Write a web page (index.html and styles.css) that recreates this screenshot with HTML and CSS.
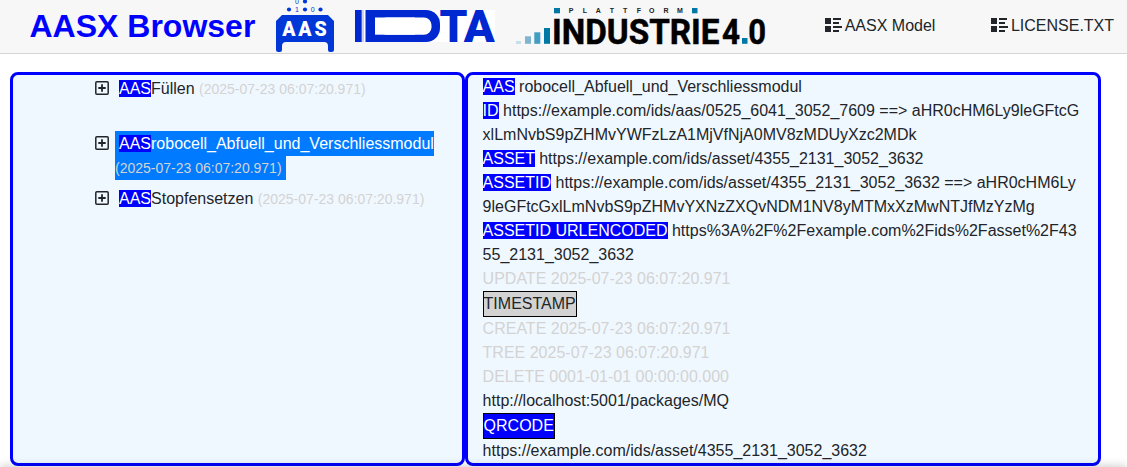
FILE: index.html
```html
<!DOCTYPE html>
<html lang="en">
<head>
<meta charset="utf-8">
<title>AASX Browser</title>
<link rel="stylesheet" href="styles.css">
</head>
<body>
<svg width="0" height="0" class="defs">
  <symbol id="list-rich" viewBox="0 0 17 14">
    <path d="M0 0h6v6H0zM0 8h6v6H0zM8 0h8v2H8zM8 4h6v2H8zM8 8h9v2H8zM8 12h6v2H8z"/>
  </symbol>
  <symbol id="plus-box" viewBox="0 0 14 14">
    <rect x=".8" y=".8" width="12.4" height="12.4" rx="1" fill="none" stroke="currentColor" stroke-width="1.5"/>
    <path d="M7 3.3v7.4M3.3 7h7.4" stroke="currentColor" stroke-width="1.8"/>
  </symbol>
</svg>
<header class="topbar">
  <h1 class="title">AASX Browser</h1>
  <svg class="logo-aas" width="60" height="53" viewBox="275 0 60 53">
    <g fill="#0038d8">
      <path d="M282 15h46l6 6v28.500a2.500 2.500 0 0 1-2.500 2.500h-1.500a2 2 0 0 1-2-2v-4q0-4-4-4h-38q-4 0-4 4v4a2 2 0 0 1-2 2h-1.500a2.500 2.500 0 0 1-2.500-2.500V21z" />
      <circle cx="305" cy="1.500" r="2.100"/><circle cx="289" cy="9.500" r="2.100"/><circle cx="305" cy="9.500" r="2.100"/><circle cx="320.500" cy="9.500" r="2.100"/>
      <g class="bits"><text x="295" y="3.500">0</text><text x="295" y="12">1</text><text x="310.700" y="12">0</text></g>
    </g>
    <text class="aas-word" x="282.300 298.300 314.500" y="36">AAS</text>
  </svg>
  <svg class="logo-idta" width="140" height="32" viewBox="0 0 140 32">
    <rect width="140" height="32" fill="#fff"/>
    <g fill="#0028d0">
      <rect width="6.700" height="32"/>
      <rect x="7.400" width="1.200" height="32" fill="#a9b5ec"/>
      <rect x="10.500" width="40" height="32"/><rect x="20" width="65" height="32" rx="14"/>
      <rect x="20" y="7.500" width="40" height="17.200" fill="#fff"/><rect x="24" y="7.500" width="52.500" height="17.200" rx="7.500" fill="#fff"/>
      <text class="idta-word" x="84.500" y="32" textLength="28" lengthAdjust="spacingAndGlyphs">T</text>
      <text class="idta-word" x="108.800" y="32" textLength="31" lengthAdjust="spacingAndGlyphs">A</text>
    </g>
  </svg>
  <svg class="logo-i40" width="252" height="40" viewBox="515 7 252 40">
    <rect x="516" y="41" width="5" height="3" fill="#c8dfea"/>
    <rect x="525" y="36.300" width="6" height="7.500" fill="#80b4cf"/>
    <rect x="534.300" y="32.300" width="6" height="11.500" fill="#419dc1"/>
    <g fill="#0078a5"><rect x="544" y="28" width="6" height="15.800"/><rect x="554" y="8" width="6" height="5.300"/><rect x="692" y="8" width="5.500" height="5.300"/><rect x="742" y="38" width="5.500" height="5.800"/></g>
    <text class="platform" y="13.300" x="568.700 582.700 595.700 609.700 623 636.700 649 663.500 677">PLATTFORM</text>
    <text class="industry" x="552" y="43.600" textLength="167.500" lengthAdjust="spacingAndGlyphs">INDUSTRIE</text>
    <text class="industry" x="722" y="43.600" textLength="18" lengthAdjust="spacingAndGlyphs">4</text>
    <text class="industry" x="748.300" y="43.600" textLength="17.800" lengthAdjust="spacingAndGlyphs">0</text>
  </svg>
  <nav class="links">
    <a class="link"><svg width="17" height="14"><use href="#list-rich"/></svg>AASX Model</a>
    <a class="link"><svg width="17" height="14"><use href="#list-rich"/></svg>LICENSE.TXT</a>
  </nav>
</header>
<main class="panels">
  <section class="panel tree">
    <div class="node first"><svg class="plus" width="14" height="14"><use href="#plus-box"/></svg><div class="label"><span class="tag">AAS</span>Füllen <span class="time">(2025-07-23 06:07:20.971)</span></div></div>
    <div class="node selected"><svg class="plus" width="14" height="14"><use href="#plus-box"/></svg><div class="label"><div class="hl"><span class="tag">AAS</span>robocell_Abfuell_und_Verschliessmodul</div><div class="hl second"><span class="time">(2025-07-23 06:07:20.971)</span></div></div></div>
    <div class="node"><svg class="plus" width="14" height="14"><use href="#plus-box"/></svg><div class="label"><span class="tag">AAS</span>Stopfensetzen <span class="time">(2025-07-23 06:07:20.971)</span></div></div>
  </section>
  <section class="panel details">
    <div><span class="tag">AAS</span> robocell_Abfuell_und_Verschliessmodul</div>
    <div><span class="tag">ID</span> https://example.com/ids/aas/0525_6041_3052_7609 ==&gt; aHR0cHM6Ly9leGFtcG<br>xlLmNvbS9pZHMvYWFzLzA1MjVfNjA0MV8zMDUyXzc2MDk</div>
    <div><span class="tag">ASSET</span> https://example.com/ids/asset/4355_2131_3052_3632</div>
    <div><span class="tag">ASSETID</span> https://example.com/ids/asset/4355_2131_3052_3632 ==&gt; aHR0cHM6Ly<br>9leGFtcGxlLmNvbS9pZHMvYXNzZXQvNDM1NV8yMTMxXzMwNTJfMzYzMg</div>
    <div><span class="tag">ASSETID URLENCODED</span> https%3A%2F%2Fexample.com%2Fids%2Fasset%2F43<br>55_2131_3052_3632</div>
    <div class="muted">UPDATE 2025-07-23 06:07:20.971</div>
    <button class="btn gray">TIMESTAMP</button>
    <div class="muted">CREATE 2025-07-23 06:07:20.971</div>
    <div class="muted">TREE 2025-07-23 06:07:20.971</div>
    <div class="muted">DELETE 0001-01-01 00:00:00.000</div>
    <div>http://localhost:5001/packages/MQ</div>
    <button class="btn blue">QRCODE</button>
    <div>https://example.com/ids/asset/4355_2131_3052_3632</div>
  </section>
</main>
<div class="edge-shadow"></div>
</body>
</html>
```

FILE: styles.css
```css
* { box-sizing: border-box; }
body { margin: 0; height: 467px; overflow: hidden; background: #fff; color: #212529; font: 16px/24px "Liberation Sans", Arial, sans-serif; }
.defs { display: block; height: 0; }
.topbar { display: flex; align-items: flex-start; height: 54px; background: #f7f7f7; border-bottom: 1px solid #d6d5d5; padding-left: 29.500px; }
.title { margin: 7px 0 0; width: 245.500px; font-size: 32px; line-height: 38px; font-weight: 700; color: #00f; white-space: nowrap; }
.topbar > svg { flex: none; }
.logo-idta { margin: 10px 0 0 20px; }
.logo-i40 { margin: 7px 0 0 20px; }
.bits { font: 400 7px "Liberation Sans", sans-serif; }
.aas-word { font: 900 19.500px Roboto, sans-serif; fill: #fff; }
.idta-word { font: 900 45px Roboto, sans-serif; }
.platform { font: 700 7px "Liberation Sans", sans-serif; fill: #222; }
.industry { font: 700 34.500px Roboto, sans-serif; fill: #000; stroke: #000; stroke-width: .5px; }
.links { display: flex; gap: 55.500px; margin: 14px 0 0 57.700px; }
.link { display: flex; gap: 3px; white-space: nowrap; }
.link svg { margin-top: 4px; fill: #212529; }
.panels { display: flex; padding: 18px 0 0 10px; }
.panel { height: 394px; border: 3px solid #00f; border-radius: 8px; background: #f0f8ff; white-space: nowrap; }
.tree { width: 455px; padding: 2px 0 0 82px; }
.details { width: 636px; padding-left: 14.600px; }
.node { display: flex; gap: 6px; margin-bottom: 7px; }
.first { margin-bottom: 30px; }
.plus { margin-top: 4px; flex: none; }
.label { padding-left: 4px; }
.selected .label { padding: 0; }
.selected .plus { margin-top: 5px; }
.hl { width: max-content; height: 25px; padding: 0 0 0 4px; background: #007bff; color: #fff; line-height: 26px; }
.hl.second { height: 24px; padding: 0 4px 0 0; line-height: 24px; }
.tag { background: #00f; color: #fff; }
.time { font-size: 14px; color: lightgray; }
.muted { color: lightgray; }
.btn { display: block; height: 26px; padding: 0; border: 1px solid #000; font: inherit; }
.gray { background: lightgray; color: #212529; }
.blue { background: #00f; color: #fff; }
.edge-shadow { position: fixed; left: 0; right: 0; top: 467px; height: 20px; box-shadow: 0 -1px 10px rgba(0, 0, 0, .2); }
```
